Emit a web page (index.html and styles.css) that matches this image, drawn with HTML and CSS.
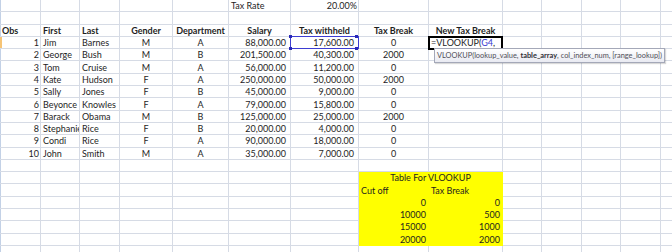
FILE: index.html
```html
<!DOCTYPE html>
<html>
<head>
<meta charset="utf-8">
<link rel="stylesheet" href="styles.css">
</head>
<body>
<table class="sheet">
<colgroup>
<col class="w41"><col class="w39"><col class="w40"><col class="w53"><col class="w56"><col class="w62"><col class="w68"><col class="w70"><col class="w74"><col class="w39"><col class="w40"><col class="w39"><col class="w40"><col class="w40">
</colgroup>
<tr><td class="rh"></td><td></td><td></td><td></td><td></td><td>Tax Rate</td><td class="r">20.00%</td><td></td><td></td><td></td><td></td><td></td><td></td><td></td></tr>
<tr><td class="rh"></td><td></td><td></td><td></td><td></td><td></td><td></td><td></td><td></td><td></td><td></td><td></td><td></td><td></td></tr>
<tr class="hd"><td class="rh">Obs</td><td>First</td><td>Last</td><td class="c">Gender</td><td class="c">Department</td><td class="c">Salary</td><td class="c">Tax withheld</td><td class="c">Tax Break</td><td class="c">New Tax Break</td><td></td><td></td><td></td><td></td><td></td></tr>
<tr><td class="rh r cur">1</td><td>Jim</td><td>Barnes</td><td class="c">M</td><td class="c">A</td><td class="r acc">88,000.00</td><td class="r acc ov"><span class="ref"></span>17,600.00</td><td class="c">0</td><td class="ov edit"><span class="active"></span>=VLOOKUP(<span class="blue">G4</span>,<div class="tip">VLOOKUP(lookup_value, <b>table_array</b>, col_index_num, [range_lookup])</div></td><td></td><td></td><td></td><td></td><td></td></tr>
<tr><td class="rh r">2</td><td>George</td><td>Bush</td><td class="c">M</td><td class="c">B</td><td class="r acc">201,500.00</td><td class="r acc">40,300.00</td><td class="c">2000</td><td></td><td></td><td></td><td></td><td></td><td></td></tr>
<tr><td class="rh r">3</td><td>Tom</td><td>Cruise</td><td class="c">M</td><td class="c">A</td><td class="r acc">56,000.00</td><td class="r acc">11,200.00</td><td class="c">0</td><td></td><td></td><td></td><td></td><td></td><td></td></tr>
<tr><td class="rh r">4</td><td>Kate</td><td>Hudson</td><td class="c">F</td><td class="c">A</td><td class="r acc">250,000.00</td><td class="r acc">50,000.00</td><td class="c">2000</td><td></td><td></td><td></td><td></td><td></td><td></td></tr>
<tr><td class="rh r">5</td><td>Sally</td><td>Jones</td><td class="c">F</td><td class="c">B</td><td class="r acc">45,000.00</td><td class="r acc">9,000.00</td><td class="c">0</td><td></td><td></td><td></td><td></td><td></td><td></td></tr>
<tr><td class="rh r">6</td><td>Beyonce</td><td>Knowles</td><td class="c">F</td><td class="c">A</td><td class="r acc">79,000.00</td><td class="r acc">15,800.00</td><td class="c">0</td><td></td><td></td><td></td><td></td><td></td><td></td></tr>
<tr><td class="rh r">7</td><td>Barack</td><td>Obama</td><td class="c">M</td><td class="c">B</td><td class="r acc">125,000.00</td><td class="r acc">25,000.00</td><td class="c">2000</td><td></td><td></td><td></td><td></td><td></td><td></td></tr>
<tr><td class="rh r">8</td><td>Stephanie</td><td>Rice</td><td class="c">F</td><td class="c">B</td><td class="r acc">20,000.00</td><td class="r acc">4,000.00</td><td class="c">0</td><td></td><td></td><td></td><td></td><td></td><td></td></tr>
<tr><td class="rh r">9</td><td>Condi</td><td>Rice</td><td class="c">F</td><td class="c">A</td><td class="r acc">90,000.00</td><td class="r acc">18,000.00</td><td class="c">0</td><td></td><td></td><td></td><td></td><td></td><td></td></tr>
<tr><td class="rh r">10</td><td>John</td><td>Smith</td><td class="c">M</td><td class="c">A</td><td class="r acc">35,000.00</td><td class="r acc">7,000.00</td><td class="c">0</td><td></td><td></td><td></td><td></td><td></td><td></td></tr>
<tr><td class="rh"></td><td></td><td></td><td></td><td></td><td></td><td></td><td></td><td></td><td></td><td></td><td></td><td></td><td></td></tr>
<tr><td class="rh"></td><td></td><td></td><td></td><td></td><td></td><td></td><td class="y c" colspan="2">Table For VLOOKUP</td><td></td><td></td><td></td><td></td><td></td></tr>
<tr><td class="rh"></td><td></td><td></td><td></td><td></td><td></td><td></td><td class="y">Cut off</td><td class="y">Tax Break</td><td></td><td></td><td></td><td></td><td></td></tr>
<tr><td class="rh"></td><td></td><td></td><td></td><td></td><td></td><td></td><td class="y r">0</td><td class="y r">0</td><td></td><td></td><td></td><td></td><td></td></tr>
<tr><td class="rh"></td><td></td><td></td><td></td><td></td><td></td><td></td><td class="y r">10000</td><td class="y r">500</td><td></td><td></td><td></td><td></td><td></td></tr>
<tr><td class="rh"></td><td></td><td></td><td></td><td></td><td></td><td></td><td class="y r">15000</td><td class="y r">1000</td><td></td><td></td><td></td><td></td><td></td></tr>
<tr><td class="rh"></td><td></td><td></td><td></td><td></td><td></td><td></td><td class="y r">20000</td><td class="y r">2000</td><td></td><td></td><td></td><td></td><td></td></tr>
<tr><td class="rh"></td><td></td><td></td><td></td><td></td><td></td><td></td><td></td><td></td><td></td><td></td><td></td><td></td><td></td></tr>
</table>
</body>
</html>
```
FILE: styles.css
```css
html, body {
  margin: 0;
  padding: 0;
  background: #ffffff;
}
body {
  width: 672px;
  height: 252px;
  overflow: hidden;
  font-family: Lato, "Liberation Sans", sans-serif;
  font-size: 9px;
  color: #1e1e1e;
}
.sheet {
  border-collapse: separate;
  border-spacing: 0;
  table-layout: fixed;
  width: 701px;
}
.w39 { width: 39px; }
.w40 { width: 40px; }
.w41 { width: 41px; }
.w53 { width: 53px; }
.w56 { width: 56px; }
.w62 { width: 62px; }
.w68 { width: 68px; }
.w70 { width: 70px; }
.w74 { width: 74px; }
.sheet td {
  box-sizing: border-box;
  height: 12.3px;
  padding: 0 2px;
  border-right: 1px solid #d6dbe5;
  border-bottom: 1px solid #d6dbe5;
  white-space: nowrap;
  overflow: hidden;
  line-height: 11px;
  vertical-align: middle;
}
.sheet td.rh { box-shadow: inset 1px 0 #c3d1e6; }
.sheet td.cur { box-shadow: inset 2px 0 #f6c476; }
.hd td { font-weight: bold; }
.sheet td.r { text-align: right; padding-right: 1px; }
.sheet td.acc { padding-right: 4px; }
.sheet td.c { text-align: center; }
.sheet td.y {
  background: #ffff00;
  border-color: #ffff00;
}
.sheet td.y.r { padding-right: 2px; }
.sheet td.ov {
  overflow: visible;
  position: relative;
}
.ref {
  position: absolute;
  left: -1px;
  top: -1px;
  right: -1px;
  bottom: -1px;
  border: 1px solid #3d3dd2;
  z-index: 2;
}
.ref::before {
  content: "";
  position: absolute;
  left: -2px;
  top: -2px;
  width: 3px;
  height: 3px;
  background: #2828b8;
  box-shadow: 66px 0 #2828b8, 0 12px #2828b8, 66px 12px #2828b8;
}
.edit { z-index: 3; }
.active {
  position: absolute;
  left: -1px;
  top: -1px;
  right: -1px;
  bottom: -2px;
  border: 2px solid #000;
  z-index: 2;
}
.blue { color: #3737d0; }
.tip {
  position: absolute;
  left: 5px;
  top: 11px;
  z-index: 4;
  padding: 1px 2px 0 2px;
  height: 12px;
  line-height: 12px;
  font-size: 7.4px;
  color: #4f4f57;
  background: linear-gradient(#ffffff, #e9eaf2);
  border: 1px solid #a4a8b8;
  box-shadow: 1px 1px 1px rgba(0, 0, 0, 0.15);
  white-space: nowrap;
}
.tip b { color: #2e2e34; }
```
